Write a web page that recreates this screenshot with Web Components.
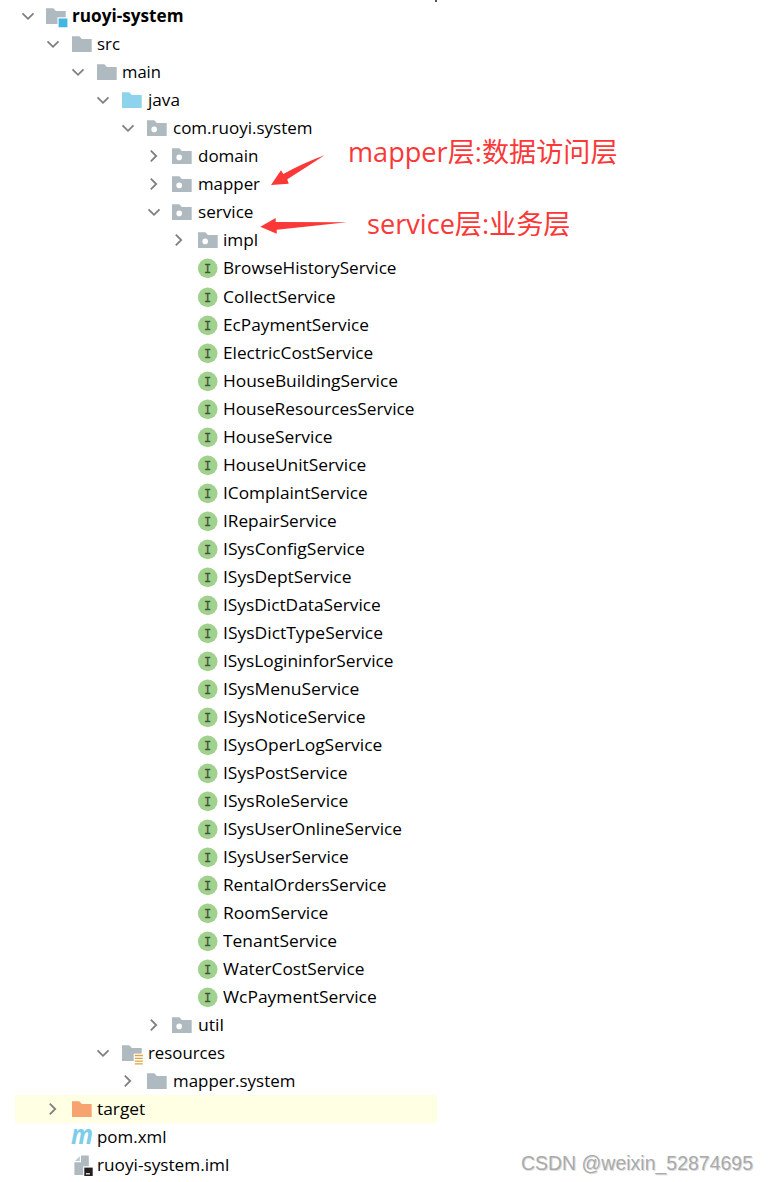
<!DOCTYPE html>
<html lang="zh-CN">
<head>
<meta charset="utf-8">
<title>ruoyi-system</title>
<style>
  body {
    margin: 0;
    background: #fff;
    font-family: "Open Sans", "Noto Sans CJK SC", sans-serif;
  }
</style>
</head>
<body>
<project-view></project-view>

<script>
const folder = (color) =>
  `<path fill="${color}" d="M0 2.2H7.3L9.9 5H19.7V18H0z"/>`;

const ICONS = {
  folder: folder("#aeb9c0"),
  source: folder("#8ed3ec"),
  excluded: folder("#f7a36f"),
  package: folder("#aeb9c0") + `<circle cx="7.2" cy="11.4" r="2.8" fill="#fff"/>`,
  module:
    folder("#aeb9c0") +
    `<path fill="#fff" d="M11.5 11.3H22V22H11.5z"/><path fill="#40b6e0" d="M12.6 12.6h8.8V21.2h-8.8z"/>`,
  resources:
    folder("#aeb9c0") +
    `<path fill="#fff" d="M11.7 10.6H22V22H11.7z"/>
     <path stroke="#e0a33e" stroke-width="1.3" d="M12.8 12.5h8M12.8 15.3h8M12.8 18.1h8M12.8 20.9h8"/>`,
  interface: `
    <circle cx="9.7" cy="10.4" r="9.8" fill="#a1d28d"/>
    <text x="9.7" y="14.8" text-anchor="middle" font-family="Liberation Mono" font-size="12" fill="#40533c" stroke="#40533c" stroke-width=".3">I</text>`,
  maven: `
    <text x="-1" y="17" font-family="Open Sans" font-size="26" font-weight="bold" font-style="italic" fill="#7bcdea" textLength="22" lengthAdjust="spacingAndGlyphs">m</text>`,
  iml: `
    <path fill="#aeb9c0" d="M9 .6H16.8V20H2.4V7.3H9z"/>
    <path fill="#c1cace" d="M7.8 1.2V6H3z"/>
    <path fill="#fff" d="M11.2 11.3H22V22H11.2z"/>
    <path fill="#231f20" d="M12.3 12.6h8.4v8.4h-8.4z"/>
    <path stroke="#fff" stroke-width="1.2" d="M13.9 18.8h4"/>`,
};

// Stretches the slotted text to the width given in the "width" attribute
class FitText extends HTMLElement {
  constructor() {
    super();
    this.attachShadow({ mode: "open" });
    this.shadowRoot.innerHTML = `
      <style>
        :host {
          display: block;
          white-space: nowrap;
        }
        span {
          display: inline-block;
          transform-origin: 0 50%;
        }
      </style>
      <span><slot></slot></span>
    `;
  }

  connectedCallback() {
    const span = this.shadowRoot.querySelector("span");
    const width = parseFloat(this.getAttribute("width"));
    const natural = span.getBoundingClientRect().width;
    if (width && natural) {
      span.style.transform = `scaleX(${width / natural})`;
    }
  }
}

// Custom Html Element: <tree-row depth="" icon="" state="" width="">
class TreeRow extends HTMLElement {
  constructor() {
    super();
    this.attachShadow({ mode: "open" });
  }

  connectedCallback() {
    const state = this.getAttribute("state");
    const chevrons = {
      open: `<path d="M1.5 4.3L7 9.8L12.5 4.3"/>`,
      closed: `<path d="M3.8 1.6L9.2 7L3.8 12.4"/>`,
    };

    this.shadowRoot.innerHTML = `
      <style>
        :host {
          display: flex;
          align-items: center;
          box-sizing: border-box;
          height: 28.04px;
          padding-left: calc(5.6px + 25.2px * var(--depth));
          color: #000;
          font-size: 17px;
          line-height: 28px;
        }
        :host([highlight]) {
          background: #ffffe4;
        }
        :host([bold]) {
          font-weight: 700;
        }
        svg {
          flex: none;
          overflow: visible;
        }
        .chevron {
          width: 14px;
          height: 14px;
          margin-right: 11.8px;
          fill: none;
          stroke: #7f7f7f;
          stroke-width: 1.8;
        }
        .icon {
          width: 20px;
          height: 20px;
          margin-right: 5.6px;
        }
      </style>
      <svg class="chevron" viewBox="0 0 14 14">${chevrons[state] || ""}</svg>
      <svg class="icon" viewBox="0 0 20 20">${ICONS[this.getAttribute("icon")]}</svg>
      <fit-text width="${this.getAttribute("width")}"><slot></slot></fit-text>
    `;
    this.style.setProperty("--depth", this.getAttribute("depth"));
  }
}

class NoteLabel extends HTMLElement {
  constructor() {
    super();
    this.attachShadow({ mode: "open" });
    this.shadowRoot.innerHTML = `
      <style>
        :host {
          display: flex;
          position: absolute;
          color: #fb3838;
          font-size: 27px;
          line-height: 36px;
        }
      </style>
      <slot></slot>
    `;
  }
}

// name, depth, icon, state, text width
const ROWS = [
  ["ruoyi-system", 0, "module", "open", 111.5],
  ["src", 1, "folder", "open", 23],
  ["main", 2, "folder", "open", 39],
  ["java", 3, "source", "open", 32],
  ["com.ruoyi.system", 4, "package", "open", 139.5],
  ["domain", 5, "package", "closed", 60.5],
  ["mapper", 5, "package", "closed", 62],
  ["service", 5, "package", "open", 55.5],
  ["impl", 6, "package", "closed", 35.2],
  ["BrowseHistoryService", 6, "interface", "", 173.5],
  ["CollectService", 6, "interface", "", 112.5],
  ["EcPaymentService", 6, "interface", "", 146],
  ["ElectricCostService", 6, "interface", "", 150.2],
  ["HouseBuildingService", 6, "interface", "", 175],
  ["HouseResourcesService", 6, "interface", "", 191.5],
  ["HouseService", 6, "interface", "", 109.5],
  ["HouseUnitService", 6, "interface", "", 143.2],
  ["IComplaintService", 6, "interface", "", 144.7],
  ["IRepairService", 6, "interface", "", 113.7],
  ["ISysConfigService", 6, "interface", "", 141.8],
  ["ISysDeptService", 6, "interface", "", 128.5],
  ["ISysDictDataService", 6, "interface", "", 157.8],
  ["ISysDictTypeService", 6, "interface", "", 160],
  ["ISysLogininforService", 6, "interface", "", 170.5],
  ["ISysMenuService", 6, "interface", "", 136.3],
  ["ISysNoticeService", 6, "interface", "", 142.5],
  ["ISysOperLogService", 6, "interface", "", 159.3],
  ["ISysPostService", 6, "interface", "", 124.5],
  ["ISysRoleService", 6, "interface", "", 125.3],
  ["ISysUserOnlineService", 6, "interface", "", 179],
  ["ISysUserService", 6, "interface", "", 125.8],
  ["RentalOrdersService", 6, "interface", "", 163.5],
  ["RoomService", 6, "interface", "", 105.3],
  ["TenantService", 6, "interface", "", 114],
  ["WaterCostService", 6, "interface", "", 141.5],
  ["WcPaymentService", 6, "interface", "", 153.7],
  ["util", 5, "package", "closed", 26],
  ["resources", 3, "resources", "open", 77],
  ["mapper.system", 4, "folder", "closed", 122.3],
  ["target", 1, "excluded", "closed", 48.3],
  ["pom.xml", 1, "maven", "", 69.5],
  ["ruoyi-system.iml", 1, "iml", "", 132.3],
];

class ProjectView extends HTMLElement {
  constructor() {
    super();
    this.attachShadow({ mode: "open" });
  }

  connectedCallback() {
    const rows = ROWS.map(([name, depth, icon, state, width]) => {
      const flags = `${name === "target" ? "highlight" : ""} ${depth === 0 ? "bold" : ""}`;
      return `<tree-row depth="${depth}" icon="${icon}" state="${state}" width="${width}" ${flags}>${name}</tree-row>`;
    }).join("");

    this.shadowRoot.innerHTML = `
      <style>
        :host {
          display: block;
          position: relative;
          box-sizing: border-box;
          width: 768px;
          height: 1182px;
          padding: 2.2px 331px 0 15px;
          overflow: hidden;
        }
        .arrows {
          position: absolute;
          left: 0;
          top: 0;
          fill: #fb3838;
        }
        .mapper {
          left: 348px;
          top: 134px;
        }
        .service {
          left: 367px;
          top: 206px;
        }
        .watermark {
          position: absolute;
          left: 520.5px;
          top: 1151px;
          color: #aaa;
          font: 20px/24px "Liberation Sans", sans-serif;
          text-shadow: 1px 1px 0 #ddd;
        }
        .mark {
          position: absolute;
          left: 435px;
          top: 0;
          width: 2px;
          height: 2px;
          background: #555;
        }
      </style>
      ${rows}
      <svg class="arrows" width="360" height="250">
        <path d="M271 185L281 170.3L283.3 174Q303 163 324.5 155.2Q305 168 287.3 179.3L288.7 183.7z"/>
        <path d="M260.3 226.7L275.7 218V222L347 222.3L276.7 229.7V233.7z"/>
      </svg>
      <note-label class="mapper"><fit-text width="269.5">mapper层:数据访问层</fit-text></note-label>
      <note-label class="service"><fit-text width="203.5">service层:业务层</fit-text></note-label>
      <fit-text class="watermark" width="232">CSDN @weixin_52874695</fit-text>
      <div class="mark"></div>
    `;
  }
}

customElements.define("fit-text", FitText);
customElements.define("tree-row", TreeRow);
customElements.define("note-label", NoteLabel);
customElements.define("project-view", ProjectView);
</script>
</body>
</html>
